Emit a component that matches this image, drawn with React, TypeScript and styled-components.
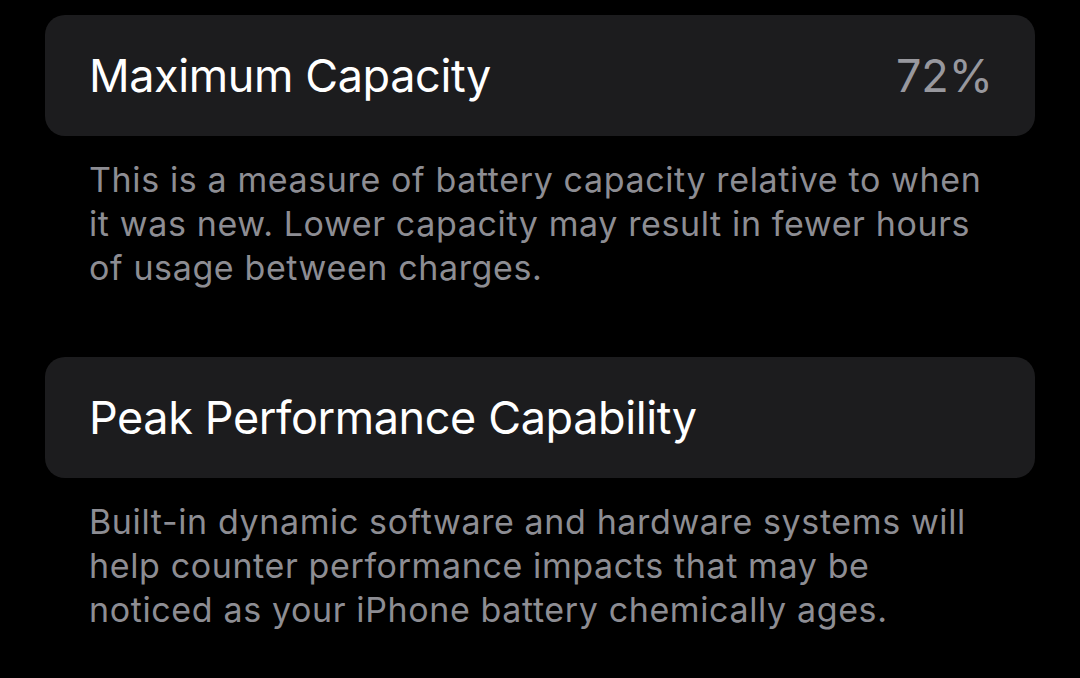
import React from 'react'
import styled, { createGlobalStyle } from 'styled-components'

const GlobalStyle = createGlobalStyle`
    html, body {
        margin: 0;
        background: #000;
    }
    body {
        font-family: Inter, "Noto Sans", "Liberation Sans", sans-serif;
        -webkit-font-smoothing: antialiased;
    }
`

const Page = styled.div`
    min-height: 678px;
    padding: 15px 45px 0 45px;
    box-sizing: border-box;
    background: #000;
`

const Section = styled.section`
    & + & {
        margin-top: 67px;
    }
`

const Card = styled.div`
    height: 121px;
    border-radius: 20px;
    background: #1c1c1e;
    padding: 0 42px 0 44px;
    box-sizing: border-box;
    display: flex;
    align-items: center;
    justify-content: space-between;
`

const Title = styled.span`
    color: #fff;
    font-size: 45px;
    font-weight: 400;
    letter-spacing: -0.4px;
`

const Value = styled.span`
    color: #98989e;
    font-size: 45px;
    font-weight: 400;
`

const Footer = styled.p`
    margin: 0;
    padding: 22px 0 0 44px;
    max-width: 906px;
    color: #8d8d93;
    font-size: 34px;
    line-height: 44px;
    letter-spacing: 0.62px;
`

interface SettingProps {
    title: string
    value?: string
    note: string
}

const Setting: React.FC<SettingProps> = ({ title, value, note }) => (
    <Section>
        <Card>
            <Title>{title}</Title>
            {value && <Value>{value}</Value>}
        </Card>
        <Footer>{note}</Footer>
    </Section>
)

const App: React.FC = () => (
    <>
        <GlobalStyle />
        <Page>
            <Setting
                title="Maximum Capacity"
                value="72%"
                note="This is a measure of battery capacity relative to when it was new. Lower capacity may result in fewer hours of usage between charges."
            />
            <Setting
                title="Peak Performance Capability"
                note="Built-in dynamic software and hardware systems will help counter performance impacts that may be noticed as your iPhone battery chemically ages."
            />
        </Page>
    </>
)

export default App
